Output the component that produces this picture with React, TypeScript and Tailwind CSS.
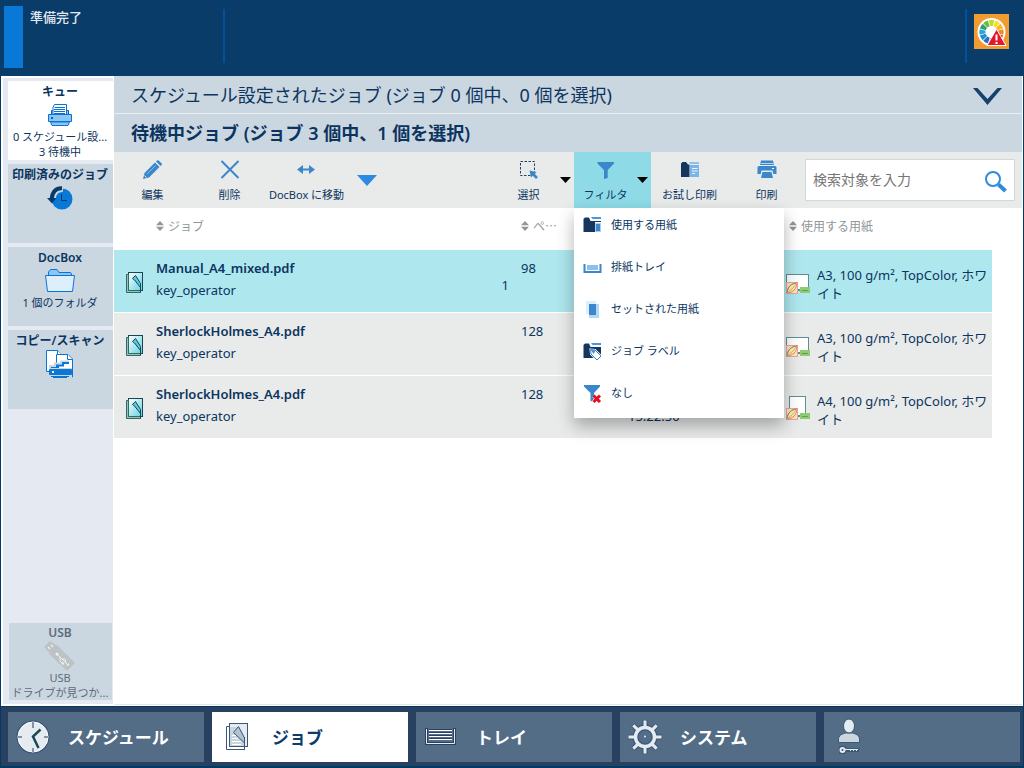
import type { ReactNode } from "react";

/* ---------- Sidebar icons ---------- */

function QueueIcon() {
  return (
    <svg width="24" height="22" viewBox="0 0 24 22" aria-hidden="true">
      <path d="M3.500 11V6.500H20.500V11" fill="#8cc6f5" stroke="#0a5fb0" />
      <path d="M5 10.500V3.500L6.500 .5H18.500V10.500Z" fill="#fff" stroke="#0a74d4" />
      <path d="M6.500 3.500H17M6 5.500H17M6 7.500H17M6 9.500H17" stroke="#0a74d4" />
      <path d="M.5 10.500H23.500V17.500H.5Z" fill="#8cc6f5" stroke="#0a74d4" />
      <path d="M2.500 18L4 21.500H20L21.500 18Z" fill="#8cc6f5" stroke="#0a74d4" />
      <rect x="3" y="13" width="2" height="2" fill="#0a5fb0" />
    </svg>
  );
}

function HistoryIcon() {
  return (
    <svg width="26" height="24" viewBox="0 0 26 24" aria-hidden="true">
      <circle cx="15" cy="13" r="10.500" fill="#0a78d6" />
      <path d="M14.500 8V14.500H20" fill="none" stroke="#003a66" />
      <path d="M16 3C10 2.500 6 6.500 5.800 13" fill="none" stroke="#cbd7e0" strokeWidth="6" />
      <path d="M15 2.200C9 1.800 5 6 4.800 13" fill="none" stroke="#063c6b" strokeWidth="4" />
      <path d="M0 12H9.500L5 17.500Z" fill="#063c6b" />
    </svg>
  );
}

function FolderIcon() {
  return (
    <svg width="30" height="24" viewBox="0 0 30 24" aria-hidden="true">
      <path d="M3.500 8V3L5.500 .5H12L14 3.500H25.500L26.500 5V8Z" fill="#8cc6f5" stroke="#0a74d4" />
      <path d="M.5 6.500H29.500L27.500 22.500H2.500Z" fill="#deeffc" stroke="#0a74d4" />
    </svg>
  );
}

function CopyScanIcon() {
  return (
    <svg width="28" height="28" viewBox="0 0 28 28" aria-hidden="true">
      <path d="M.5 .5H11.500L15.500 4.500V21.500H.5Z" fill="#fff" stroke="#0a74d4" />
      <path d="M11.500 .5V4.500H15.500" fill="#fff" stroke="#0a74d4" />
      <path d="M10.500 4.500H22L26.500 9V27H10.500Z" fill="#fff" stroke="#0a74d4" />
      <path d="M21.500 4.500V9.500H26.500" fill="#fff" stroke="#0a74d4" />
      <path d="M4 18V16H9V13.500H15V11.500H23" fill="none" stroke="#cbd7e0" strokeWidth="2" />
      <path d="M5 18H12V15.500H17V13H23" fill="none" stroke="#0a78d6" strokeWidth="2" />
      <rect x="3" y="18" width="23" height="10" fill="#cbd7e0" />
      <rect x="3" y="19" width="23" height="6" rx="1" fill="#0a78d6" />
      <rect x="6" y="21" width="2" height="2" fill="#fff" />
      <path d="M5 26.500H23M7 27.500H21" stroke="#0a74d4" />
    </svg>
  );
}

function UsbIcon() {
  return (
    <svg width="32" height="31" viewBox="0 0 32 31" aria-hidden="true">
      <path d="M6 0L14 5.500L6 12.500L0 6Z" fill="#bdc2c5" />
      <path d="M13 4L31 22L23 30L5 13Z" fill="#bdc2c5" />
      <path d="M4 6L6 8M7 4L9 6" stroke="#eef1f2" strokeWidth="1.500" />
      <path d="M13 13L24 24M16 16V20L18 22M18 18H21L22 21" fill="none" stroke="#eef1f2" />
      <circle cx="13" cy="13" r="1.500" fill="#eef1f2" />
      <circle cx="19" cy="22.500" r="1.200" fill="#eef1f2" />
      <path d="M22 24.500H25V22Z" fill="#eef1f2" />
    </svg>
  );
}

/* ---------- Toolbar icons ---------- */

function PencilIcon() {
  return (
    <svg width="20" height="20" viewBox="0 0 20 20" aria-hidden="true">
      <path d="M0 19L1.500 13L12 2.500L16.500 7L6 17.500Z" fill="#3a87cc" />
      <path d="M13 1.500L14 .6Q15 0 16 .8L18.500 3.300Q19.300 4.300 18.500 5.200L17.500 6Z" fill="#3a87cc" />
      <path d="M4 14L12.500 5.500" stroke="#8ab9e2" />
      <path d="M1.500 15.500L3.500 17.500" stroke="#e9ebea" />
    </svg>
  );
}

function CrossIcon() {
  return (
    <svg width="20" height="20" viewBox="0 0 20 20" aria-hidden="true">
      <path d="M1.500 1L18.500 18M18.500 1L1.500 18" stroke="#3a87cc" strokeWidth="2" />
    </svg>
  );
}

function MoveIcon() {
  return (
    <svg width="18" height="20" viewBox="0 0 18 20" aria-hidden="true">
      <path d="M3 9.500H15" stroke="#3a87cc" strokeWidth="2" />
      <path d="M0 9.500L6 5V14ZM18 9.500L12 5V14Z" fill="#3a87cc" />
    </svg>
  );
}

function SelectIcon() {
  return (
    <svg width="20" height="20" viewBox="0 0 20 20" aria-hidden="true">
      <rect x="1.500" y="1.500" width="14" height="14" fill="none" stroke="#27415f" strokeDasharray="2.500 1.500" />
      <path d="M10.500 10.500L17.500 12L15.800 13.800L19 17.300L17 19L13.800 15.800L12 17.500Z" fill="#3a87cc" />
    </svg>
  );
}

function FilterIcon() {
  return (
    <svg width="20" height="20" viewBox="0 0 20 20" aria-hidden="true">
      <path d="M1.500 2H18V3.500L11.700 10V18L8 19V10L1.500 3.500Z" fill="#3a87cc" />
    </svg>
  );
}

function ProofIcon() {
  return (
    <svg width="18" height="20" viewBox="0 0 18 20" aria-hidden="true">
      <path d="M0 3.500L1.500 2H5L7 4.500H8.500V17H0Z" fill="#16365e" />
      <path d="M8 2H18V4H9Z" fill="#8fc0ec" />
      <path d="M9 5H18V17H9Z" fill="#7ab5ea" />
      <path d="M11 8.500H16.500M11 11H16.500M11 13.500H14" stroke="#e9f2fb" />
    </svg>
  );
}

function PrintIcon() {
  return (
    <svg width="20" height="20" viewBox="0 0 20 20" aria-hidden="true">
      <path d="M4 .5H16L17 5H3Z" fill="#3a87cc" />
      <path d="M3.500 3.500H16.500" stroke="#b9d3ea" />
      <path d="M2 6H18Q19.500 6 19.500 7.500V14H.5V7.500Q.5 6 2 6Z" fill="#3a87cc" />
      <path d="M4.500 10.500H15.500L17.500 19H2.500Z" fill="#e9ebea" />
      <path d="M5.500 12H14.500L16 18H4Z" fill="#3a87cc" />
      <rect x="15" y="8" width="2" height="1" fill="#fff" />
    </svg>
  );
}

function SearchIcon() {
  return (
    <svg width="22" height="22" viewBox="0 0 22 22" aria-hidden="true">
      <circle cx="8" cy="8" r="7" fill="none" stroke="#2f8ae0" strokeWidth="2" />
      <path d="M13.500 13.500L20.500 20" stroke="#2f8ae0" strokeWidth="4" />
    </svg>
  );
}

function Caret() {
  return (
    <svg width="11" height="6" viewBox="0 0 11 6" aria-hidden="true">
      <path d="M0 0H11L5.500 6Z" fill="#000" />
    </svg>
  );
}

/* ---------- Menu icons ---------- */

function MediaMenuIcon() {
  return (
    <svg width="20" height="18" viewBox="0 0 20 18" aria-hidden="true">
      <path d="M.5 3L2 1.500H6L7.500 5H18V6H12V16H.5Z" fill="#16365e" />
      <path d="M8 1H18V3H9.500Z" fill="#4b96dc" />
      <rect x="12" y="7" width="6" height="9" fill="#a8d0f3" />
      <rect x="13" y="8" width="4" height="7" fill="#3a87cc" />
    </svg>
  );
}

function TrayMenuIcon() {
  return (
    <svg width="20" height="18" viewBox="0 0 20 18" aria-hidden="true">
      <path d="M1.500 6V14H17.500V6" fill="none" stroke="#3a87cc" strokeWidth="2" />
      <rect x="4" y="7" width="11" height="5" fill="#8fc0ec" />
    </svg>
  );
}

function LoadedMenuIcon() {
  return (
    <svg width="20" height="18" viewBox="0 0 20 18" aria-hidden="true">
      <rect x="3" y="1" width="10" height="13" fill="#deeffc" />
      <rect x="6" y="4" width="10" height="14" fill="#b3d8f5" />
      <rect x="6" y="4" width="7" height="11" fill="#3a87cc" />
    </svg>
  );
}

function LabelMenuIcon() {
  return (
    <svg width="20" height="19" viewBox="0 0 20 19" aria-hidden="true">
      <path d="M.5 3L2 1.500H6L7.500 5H18V16H.5Z" fill="#16365e" />
      <path d="M8 1H18V3H9.500Z" fill="#4b96dc" />
      <path d="M7.500 7.500L12 8L18 14L14 18L8 12Z" fill="#fff" stroke="#fff" strokeWidth="2" />
      <path d="M7.500 7.500L12 8L18 14L14 18L8 12Z" fill="#fff" stroke="#3a87cc" />
      <path d="M8 8L12.500 8.500L10.500 12Z" fill="#3a87cc" />
    </svg>
  );
}

function NoneMenuIcon() {
  return (
    <svg width="20" height="19" viewBox="0 0 20 19" aria-hidden="true">
      <path d="M1 1H17V2.500L11 9V16L7.500 17.500V9L1 2.500Z" fill="#3a87cc" />
      <path d="M11 11.500L17 18M17 11.500L11 18" stroke="#fff" strokeWidth="4.500" />
      <path d="M10.500 11.500L17 18M17 11.500L10.500 18" stroke="#e8101c" strokeWidth="3" />
    </svg>
  );
}

/* ---------- Table icons ---------- */

function SortIcon() {
  return (
    <svg width="8" height="10" viewBox="0 0 8 10" aria-hidden="true">
      <path d="M4 0L8 4.300H0ZM4 10L8 5.700H0Z" fill="#8f9799" />
    </svg>
  );
}

function JobIcon() {
  return (
    <svg width="18" height="22" viewBox="0 0 18 22" aria-hidden="true">
      <defs>
        <linearGradient id="jobPage" x1="0" y1="0" x2="1" y2="1">
          <stop offset="0" stopColor="#fff" />
          <stop offset="1" stopColor="#5fd0e2" />
        </linearGradient>
      </defs>
      <rect x="2.500" y=".5" width="14" height="18" fill="url(#jobPage)" stroke="#17484f" />
      <path d="M.5 2.500H2.500V18.500H14.500V20.500H.5Z" fill="#a5b9c9" stroke="#2c6e5e" />
      <path d="M6.500 6.500L9.500 3.500L14.500 11.500V15.500L8.500 8Z" fill="#58cbe0" stroke="#17484f" />
      <path d="M14.500 12V20.500" stroke="#17484f" />
    </svg>
  );
}

function PaperIcon({ portrait }: { portrait: boolean }) {
  return (
    <svg width="25" height="25" viewBox="0 0 25 25" aria-hidden="true">
      {portrait ? (
        <rect x="3.500" y=".5" width="16" height="19" fill="#fff" stroke="#5f8f91" />
      ) : (
        <rect x=".5" y="4.500" width="22" height="15" fill="#fff" stroke="#5f8f91" />
      )}
      <rect x=".5" y="12.500" width="11" height="11" fill="#fde3c4" stroke="#f0a590" />
      <path d="M1 23C1.500 17 5 13.500 11 13C10.500 19 7 22.500 1 23Z" fill="#fdf3a6" stroke="#d88f80" />
      <path d="M1 23C1.500 17 5 13.500 11 13" fill="none" stroke="#7e9a86" />
      <path d="M1 23Q7 19 11 13" fill="none" stroke="#f2a07c" />
      <rect x="14" y="17" width="10" height="6" fill="#8fca74" />
      <path d="M12 20.500H14M16 20.500H22" stroke="#62a04c" />
    </svg>
  );
}

/* ---------- Footer icons ---------- */

function ClockIcon() {
  return (
    <svg width="34" height="34" viewBox="0 0 34 34" aria-hidden="true">
      <circle cx="17" cy="17" r="15.500" fill="#e6ebf2" stroke="#3b5876" strokeWidth="2" />
      <circle cx="17" cy="17" r="15" fill="#e6ebf2" stroke="#fff" />
      <path d="M17 2V8M17 28V32M2 17H6M28 17H32" stroke="#1d3d5c" />
      <path d="M24.500 9.500L17 16.500L22.500 28" fill="none" stroke="#1c4a52" strokeWidth="2.500" />
    </svg>
  );
}

function JobsIcon() {
  return (
    <svg width="22" height="28" viewBox="0 0 22 28" aria-hidden="true">
      <rect x="3.500" y=".5" width="18" height="23" fill="#e6ebf2" stroke="#3b5876" />
      <path d="M.5 3.500H3.500V23.500H18.500V26.500H.5Z" fill="#fff" stroke="#3b5876" />
      <path d="M4 4H13L18 12V23H4Z" fill="#c9d5df" />
      <path d="M6 12.500H10M6 15.500H12M6 18.500H15M6 21.500H15" stroke="#fff" />
      <path d="M7.500 9.500L12.500 3.500L18.500 15V20Z" fill="#b2c3d2" stroke="#3b5876" />
      <path d="M18.500 14V26.500" stroke="#3b5876" />
    </svg>
  );
}

function TrayIcon() {
  return (
    <svg width="32" height="18" viewBox="0 0 32 18" aria-hidden="true">
      <path d="M1.500 0V15.500H29.500V0" fill="none" stroke="#294161" strokeWidth="3" />
      <path d="M1.500 1V15.500H29.500V1" fill="none" stroke="#e6ebf2" />
      <path d="M4 1.500H27M4 4.500H27M4 7.500H27M4 10.500H27" stroke="#294161" />
      <path d="M4 2.500H27M4 5.500H27M4 8.500H27M4 11.500H27" stroke="#fff" />
    </svg>
  );
}

const gearAngles = [0, 45, 90, 135, 180, 225, 270, 315];

function GearIcon() {
  return (
    <svg width="36" height="36" viewBox="0 0 36 36" aria-hidden="true">
      {gearAngles.map((a) => (
        <path key={a} d="M18 9V1" stroke="#3b5876" strokeWidth="5" transform={`rotate(${a} 18 18)`} />
      ))}
      <circle cx="18" cy="18" r="9.500" fill="none" stroke="#3b5876" strokeWidth="6" />
      {gearAngles.map((a) => (
        <path key={a} d="M18 9V1.500" stroke="#e6ebf2" strokeWidth="3" transform={`rotate(${a} 18 18)`} />
      ))}
      <circle cx="18" cy="18" r="9.500" fill="none" stroke="#e6ebf2" strokeWidth="3.500" />
      <circle cx="18" cy="17.500" r="1" fill="#e6ebf2" />
    </svg>
  );
}

function UserKeyIcon() {
  return (
    <svg width="22" height="38" viewBox="0 0 22 38" aria-hidden="true">
      <path d="M.5 24.500V20Q1 16.500 7 15H15Q21 16.500 21.500 20V24.500Z" fill="#cbd7e0" stroke="#3b5876" />
      <ellipse cx="11" cy="8" rx="5.500" ry="7" fill="#e6ebf2" stroke="#3b5876" />
      <rect x="1" y="28" width="7" height="8" rx="1" fill="#3b5876" />
      <path d="M7 32H21" stroke="#3b5876" strokeWidth="4" />
      <circle cx="4.500" cy="32" r="2" fill="none" stroke="#e6ebf2" strokeWidth="2" />
      <path d="M7 31.500H20" stroke="#e6ebf2" />
      <path d="M12.500 33V31M15.500 33V31M18.500 33V31" stroke="#e6ebf2" />
    </svg>
  );
}

const wheel = ["#c5d92d", "#f7e02a", "#f9b81f", "#f08a24", "#e8332c", "#d92b5a", "#6a4fa0", "#2b6fc0", "#1f8fd0", "#2aa5d8", "#2fa36b", "#6dbb45"];

function ColorAlertIcon() {
  return (
    <svg width="35" height="35" viewBox="0 0 35 35" aria-hidden="true">
      <rect width="35" height="35" fill="#f29b30" />
      <circle cx="17.500" cy="18" r="14" fill="#fff" />
      {wheel.map((c, i) => (
        <path key={i} d="M16.200 12L14.800 6.200Q17.500 5.500 20.200 6.200L18.800 12Z" fill={c} transform={`rotate(${i * 30} 17.500 18)`} />
      ))}
      <path d="M22.500 15L32 31.500H13Z" fill="#e3192b" stroke="#fff" strokeLinejoin="round" />
      <path d="M22.500 20.500V26.500M22.500 28V30" stroke="#fff" strokeWidth="2" />
    </svg>
  );
}

/* ---------- Building blocks ---------- */

interface TileProps {
  title: string;
  icon: ReactNode;
  lines?: string[];
  active?: boolean;
  compact?: boolean;
}

function SideTile({ title, icon, lines = [], active = false, compact = false }: TileProps) {
  return (
    <button
      type="button"
      className={`flex flex-col items-center overflow-hidden pr-px text-[11px] leading-[15px] whitespace-nowrap ${compact ? "h-[77px] pt-px" : "h-[79px] pt-0.5"} ${active ? "bg-white" : "bg-[#cbd7e0]"}`}
    >
      <span className="text-xs leading-[18px] font-semibold">{title}</span>
      <span className="flex h-7 items-center">{icon}</span>
      {lines.map((line) => (
        <span key={line}>{line}</span>
      ))}
    </button>
  );
}

function ToolButton({ icon, label, caret = false, active = false }: { icon: ReactNode; label: string; caret?: boolean; active?: boolean }) {
  return (
    <button
      type="button"
      className={`flex h-14 w-[77px] shrink-0 items-center justify-center text-[11px] leading-[18px] whitespace-nowrap ${active ? "bg-[#8edae7]" : ""}`}
    >
      <span className={`flex flex-col items-center gap-1.5 pt-1 ${caret ? "flex-1" : ""}`}>
        <span className="flex h-5 items-center">{icon}</span>
        <span>{label}</span>
      </span>
      {caret && (
        <span className="pr-[3px]">
          <Caret />
        </span>
      )}
    </button>
  );
}

const menuItems = [
  { label: "使用する用紙", icon: <MediaMenuIcon /> },
  { label: "排紙トレイ", icon: <TrayMenuIcon /> },
  { label: "セットされた用紙", icon: <LoadedMenuIcon /> },
  { label: "ジョブ ラベル", icon: <LabelMenuIcon /> },
  { label: "なし", icon: <NoneMenuIcon /> },
];

const jobs = [
  { name: "Manual_A4_mixed.pdf", owner: "key_operator", copies: "1", pages: "98", time: "", size: "A3", selected: true },
  { name: "SherlockHolmes_A4.pdf", owner: "key_operator", copies: "", pages: "128", time: "", size: "A3", selected: false },
  { name: "SherlockHolmes_A4.pdf", owner: "key_operator", copies: "", pages: "128", time: "15:22:50", size: "A4", selected: false },
];

const tabs = [
  { label: "スケジュール", icon: <ClockIcon />, active: false },
  { label: "ジョブ", icon: <JobsIcon />, active: true },
  { label: "トレイ", icon: <TrayIcon />, active: false },
  { label: "システム", icon: <GearIcon />, active: false },
  { label: "", icon: <UserKeyIcon />, active: false },
];

function SortHeader({ label }: { label: string }) {
  return (
    <button type="button" className="flex items-center gap-1 leading-[18px] whitespace-nowrap">
      <SortIcon />
      {label}
    </button>
  );
}

export default function App() {
  return (
    <div className="flex min-h-screen flex-col bg-[#093c69] font-['Noto_Sans','Noto_Sans_CJK_JP',sans-serif] text-[#0b3560]">
      <header className="flex h-19 items-start pr-[15px] pl-1">
        <div className="mt-1.5 h-[62px] w-[19px] bg-[#0a78d6]" />
        <div className="mt-2 ml-[7px] w-[193px] text-[13px] leading-[18px] font-medium text-[#e3e9f0]">準備完了</div>
        <div className="mt-[9px] h-[54px] w-0.5 bg-[#03519a]" />
        <div className="mt-[9px] ml-auto h-[54px] w-0.5 bg-[#03519a]" />
        <button type="button" aria-label="色" className="mt-3.5 ml-[7px]">
          <ColorAlertIcon />
        </button>
      </header>

      <div className="flex flex-1 border-r border-l border-[#003b66] bg-white pr-px pb-px pl-0.5">
        <nav className="mt-0.5 mb-px flex w-[110px] shrink-0 flex-col gap-1 bg-[#e5e9f2] pt-[3px] pl-[5px]">
          <SideTile title="キュー" icon={<QueueIcon />} lines={["0 スケジュール設...", "3 待機中"]} active />
          <SideTile title="印刷済みのジョブ" icon={<HistoryIcon />} />
          <SideTile title="DocBox" icon={<FolderIcon />} lines={["1 個のフォルダ"]} />
          <SideTile title="コピー/スキャン" icon={<CopyScanIcon />} />
          <div className="mt-auto mr-px mb-1 ml-px flex flex-col text-[#5b6c7d]">
            <SideTile title="USB" icon={<UsbIcon />} lines={["USB", "ドライブが見つか..."]} compact />
          </div>
        </nav>

        <main className="ml-px min-w-0 flex-1 border-b border-[#e3e7ea]">
          <button type="button" className="flex h-[38px] w-full items-center justify-between border-b border-[#e9edf0] bg-[#cbd7e0] pr-5 pl-[17px] text-lg leading-6">
            <span>スケジュール設定されたジョブ (ジョブ 0 個中、0 個を選択)</span>
            <svg width="29" height="17" viewBox="0 0 29 17" className="mt-1" aria-hidden="true">
              <path d="M0 0H4.500L14.500 11L24.500 0H29L14.500 17Z" fill="#16406d" />
            </svg>
          </button>
          <h1 className="flex h-[38px] items-center bg-[#cbd7e0] pl-[17px] text-lg leading-6 font-semibold">
            待機中ジョブ (ジョブ 3 個中、1 個を選択)
          </h1>

          <div className="flex h-14 items-center bg-[#e9ebea] pr-[7px]">
            <ToolButton icon={<PencilIcon />} label="編集" />
            <ToolButton icon={<CrossIcon />} label="削除" />
            <ToolButton icon={<MoveIcon />} label="DocBox に移動" />
            <button type="button" aria-label="その他" className="flex h-14 w-11 items-center justify-center">
              <svg width="20" height="11" viewBox="0 0 20 11" aria-hidden="true">
                <path d="M0 0H20L10 11Z" fill="#2c8ae2" />
              </svg>
            </button>
            <div className="ml-auto flex">
              <ToolButton icon={<SelectIcon />} label="選択" caret />
              <div className="relative">
                <ToolButton icon={<FilterIcon />} label="フィルタ" caret active />
                <div role="menu" className="absolute top-full left-0 z-10 w-[210px] bg-white shadow-[0_8px_16px_rgba(0,0,0,0.3)]">
                  {menuItems.map((item) => (
                    <button
                      key={item.label}
                      type="button"
                      role="menuitem"
                      className="flex h-[42px] w-full items-center gap-2 pb-2 pl-[9px] text-[11px] leading-[18px]"
                    >
                      {item.icon}
                      {item.label}
                    </button>
                  ))}
                </div>
              </div>
              <ToolButton icon={<ProofIcon />} label="お試し印刷" />
              <ToolButton icon={<PrintIcon />} label="印刷" />
            </div>
            <label className="flex h-[42px] w-[210px] shrink-0 items-center border border-[#d3d7d8] bg-white pr-[7px] pl-[7px]">
              <input
                type="text"
                aria-label="検索対象を入力"
                placeholder="検索対象を入力"
                className="min-w-0 flex-1 text-sm leading-5 outline-none placeholder:text-[#757575]"
              />
              <span className="pt-1">
                <SearchIcon />
              </span>
            </label>
          </div>

          <div className="pr-[30px]">
            <table className="w-full table-fixed border-separate border-spacing-0 text-left text-[13px]">
              <colgroup>
                <col className="w-[42px]" />
                <col />
                <col className="w-[40px]" />
                <col className="w-[61px]" />
                <col className="w-[210px]" />
                <col className="w-[33px]" />
                <col className="w-[175px]" />
              </colgroup>
              <thead>
                <tr className="h-[42px] align-top font-['Noto_Sans_CJK_JP',sans-serif] text-xs text-[#8f9799]">
                  <td />
                  <th className="pt-[9px] font-normal">
                    <SortHeader label="ジョブ" />
                  </th>
                  <td />
                  <th className="pt-[9px] pl-2 font-normal">
                    <SortHeader label="ペ⋯" />
                  </th>
                  <td />
                  <th colSpan={2} className="pt-[9px] pl-[5px] font-normal">
                    <SortHeader label="使用する用紙" />
                  </th>
                </tr>
              </thead>
              <tbody>
                {jobs.map((job, i) => (
                  <tr key={i} className={`h-[63px] align-top leading-[22px] *:border-b *:border-white ${job.selected ? "bg-[#aee7ee]" : "bg-[#e9ebea]"}`}>
                    <td className="pt-[22px] pl-3">
                      <JobIcon />
                    </td>
                    <td className="pt-[7px]">
                      <div className="truncate font-semibold">{job.name}</div>
                      <div className="truncate">{job.owner}</div>
                    </td>
                    <td className="pt-[24px] pr-1 text-right">{job.copies}</td>
                    <td className="pt-[7px] pl-2">{job.pages}</td>
                    <td className="pt-[29px] pl-[54px]">{job.time}</td>
                    <td className="pt-5 pl-0.5">
                      <PaperIcon portrait={job.size === "A4"} />
                    </td>
                    <td className="pt-4 leading-[18px] whitespace-nowrap">
                      {job.size}, 100 g/m², TopColor, ホワ
                      <br />
                      イト
                    </td>
                  </tr>
                ))}
              </tbody>
            </table>
          </div>
        </main>
      </div>

      <footer className="border-t border-r border-b-2 border-l border-[#003b66] bg-[#294161] pt-[5px] pr-[3px] pb-1 pl-[7px]">
        <nav className="grid grid-cols-5 gap-2">
          {tabs.map((tab) => (
            <button
              key={tab.label}
              type="button"
              aria-label={tab.label || "ユーザー"}
              className={`flex h-[50px] items-center gap-2.5 text-[17px] leading-6 font-bold whitespace-nowrap ${tab.active ? "bg-white text-[#0b3d6b]" : "bg-[#546d87] text-white"}`}
            >
              <span className="flex w-[50px] justify-center">{tab.icon}</span>
              <span className="pt-0.5">{tab.label}</span>
            </button>
          ))}
        </nav>
      </footer>
    </div>
  );
}
